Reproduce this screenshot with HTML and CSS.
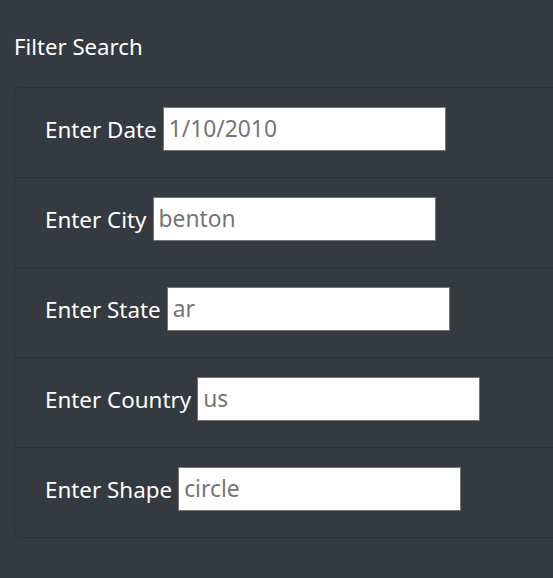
FILE: index.html
```html
<!DOCTYPE html>
<html>
<head>
<meta charset="utf-8">
<link rel="stylesheet" href="styles.css">
</head>
<body>
<div class="page">
  <h4 class="title">Filter Search</h4>
  <ul class="filters">
    <li class="filter"><label for="date">Enter Date</label><input id="date" type="text" placeholder="1/10/2010"></li>
    <li class="filter"><label for="city">Enter City</label><input id="city" type="text" placeholder="benton"></li>
    <li class="filter"><label for="state">Enter State</label><input id="state" type="text" placeholder="ar"></li>
    <li class="filter"><label for="country">Enter Country</label><input id="country" type="text" placeholder="us"></li>
    <li class="filter"><label for="shape">Enter Shape</label><input id="shape" type="text" placeholder="circle"></li>
  </ul>
</div>
</body>
</html>
```

FILE: styles.css
```css
html, body {
  margin: 0;
  padding: 0;
  background: #343a40;
  height: 100%;
}
body {
  font-family: "Noto Sans", "Open Sans", sans-serif;
  color: #ffffff;
}
.page {
  padding: 34px 0 0 14px;
}
.title {
  margin: 0 0 26px 0;
  font-size: 22.2px;
  font-weight: 400;
  line-height: 1.2;
}
.filters {
  list-style: none;
  margin: 0;
  padding: 0;
  width: 560px;
  border: 1px solid #2d3238;
  border-radius: 4px;
}
.filter {
  display: flex;
  align-items: center;
  gap: 6px;
  padding: 19px 0 26px 30px;
  height: 44px;
}
.filter + .filter {
  border-top: 1px solid #2d3238;
}
.filter label {
  font-size: 22.4px;
  padding-top: 2px;
}
.filter input {
  box-sizing: border-box;
  width: 283px;
  height: 44px;
  margin: 0;
  border: 1px solid #767676;
  border-radius: 0;
  padding: 0 5px;
  font-family: "Noto Sans", "Open Sans", sans-serif;
  font-size: 22.8px;
  background: #fff;
  outline: none;
}
.filter input::placeholder {
  color: #757575;
  opacity: 1;
}
```
